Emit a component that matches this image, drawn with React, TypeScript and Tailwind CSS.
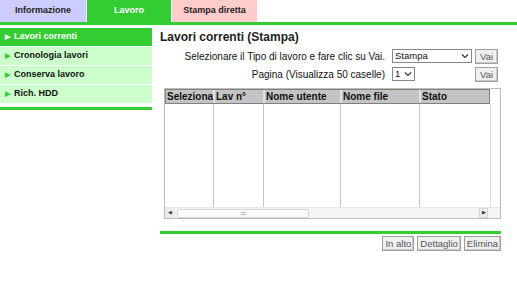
import React from 'react';

const tabs = [
  { label: 'Informazione', cls: 'w-[86px] bg-[#ccccff] text-[#222]' },
  { label: 'Lavoro', cls: 'w-[84px] bg-[#33cc33] text-white' },
  { label: 'Stampa diretta', cls: 'w-[85px] bg-[#ffcccc] text-[#222]' },
];

const menu = ['Lavori correnti', 'Cronologia lavori', 'Conserva lavoro', 'Rich. HDD'];

const cols = [
  { label: 'Seleziona', w: 'w-[49px]' },
  { label: 'Lav n°', w: 'w-[50px]' },
  { label: 'Nome utente', w: 'w-[77px]' },
  { label: 'Nome file', w: 'w-[79px]' },
  { label: 'Stato', w: 'flex-1' },
];

function Btn({ children, wide }: { children: React.ReactNode; wide?: boolean }) {
  return (
    <button
      className={`h-[15px] ${wide ? 'px-[4px]' : 'px-[2px]'} border border-[#a0a0a0] bg-[#f0f0f0] text-[9.5px] leading-[13px] text-[#555] shadow-[inset_-1px_-1px_0_#c8c8c8] whitespace-nowrap`}
    >
      {children}
    </button>
  );
}

function Arrow() {
  return (
    <svg width="8" height="6" viewBox="0 0 8 6">
      <path d="M1 1.5 L4 4.5 L7 1.5" stroke="#333" strokeWidth="1.2" fill="none" />
    </svg>
  );
}

export default function App() {
  return (
    <div className="w-[517px] h-[295px] bg-white font-['Liberation_Sans',Arial,sans-serif] text-[10px] text-[#111] overflow-hidden">
      {/* Tabs */}
      <div className="flex gap-[1px] h-[22px] border-b-[3px] border-[#33cc33] box-content">
        {tabs.map((t) => (
          <div key={t.label} className={`${t.cls} flex items-center justify-center font-bold text-[9px]`}>
            {t.label}
          </div>
        ))}
      </div>

      <div className="flex">
        {/* Sidebar */}
        <div className="w-[152px] pt-[3px]">
          <div className="flex flex-col gap-[1px]">
            {menu.map((m, i) => (
              <div
                key={m}
                className={`h-[18px] flex items-center pl-[5px] gap-[4px] font-bold text-[9px] ${
                  i === 0 ? 'bg-[#33cc33] text-white' : 'bg-[#ccffcc] text-[#111]'
                }`}
              >
                <span className={`text-[7px] ${i === 0 ? 'text-white' : 'text-[#33cc33]'}`}>▶</span>
                {m}
              </div>
            ))}
          </div>
          <div className="mt-[4px] h-[3px] bg-[#33cc33]" />
        </div>

        {/* Main */}
        <div className="ml-[8px] w-[341px]">
          <div className="mt-[5px] font-bold text-[12px] leading-[14px] text-[#222]">Lavori correnti (Stampa)</div>

          <div className="mt-[3px] flex items-center h-[18px]">
            <span className="w-[232px] shrink-0 text-right pr-[7px] whitespace-nowrap">
              Selezionare il Tipo di lavoro e fare clic su Vai.
            </span>
            <div className="w-[80px] h-[14px] border border-[#888] flex items-center justify-between px-[2px] text-[9.5px]">
              <span>Stampa</span>
              <Arrow />
            </div>
            <div className="ml-[3px]"><Btn wide>Vai</Btn></div>
          </div>

          <div className="flex items-center h-[18px]">
            <span className="w-[232px] shrink-0 text-right pr-[7px] whitespace-nowrap">Pagina (Visualizza 50 caselle)</span>
            <div className="w-[23px] h-[14px] border border-[#888] flex items-center justify-between px-[2px] text-[9.5px]">
              <span>1</span>
              <Arrow />
            </div>
            <div className="ml-[60px]"><Btn wide>Vai</Btn></div>
          </div>

          {/* Table box */}
          <div className="mt-[5px] ml-[4px] w-[337px] h-[131px] border border-[#bdbdbd] flex flex-col">
            <div className="flex flex-1">
              <div className="w-[325px] flex flex-col">
                <div className="flex h-[15px] bg-[#c4c4c4] border border-[#808080]">
                  {cols.map((c, i) => (
                    <div
                      key={c.label}
                      className={`${c.w} font-bold text-[10px] leading-[13px] pl-[1px] text-[#111] whitespace-nowrap ${i < cols.length - 1 ? 'border-r-2 border-[#e2e2e2]' : ''}`}
                    >
                      {c.label}
                    </div>
                  ))}
                </div>
                <div className="flex flex-1">
                  {cols.map((c, i) => (
                    <div key={c.label} className={`${c.w} ${i < cols.length - 1 ? 'border-r border-[#c4c4c4]' : ''}`} />
                  ))}
                </div>
              </div>
              <div className="flex-1 border-l border-[#dcdcdc] mt-[15px]" />
            </div>
            {/* horizontal scrollbar */}
            <div className="h-[11px] flex items-center bg-[#f4f4f4] border-t border-[#e6e6e6]">
              <div className="w-[10px] h-[10px] flex items-center justify-center bg-[#ececec]">
                <span className="text-[5px] text-[#333]">◀</span>
              </div>
              <div className="ml-[2px] w-[132px] h-[9px] bg-[#fafafa] border border-[#d6d6d6] rounded-[2px] flex items-center justify-center">
                <div className="w-[5px] h-[3px] border-y border-[#bbb]" />
              </div>
              <div className="flex-1" />
              <div className="w-[9px] h-[10px] flex items-center justify-center bg-[#ececec] border border-[#d6d6d6] mr-[12px]">
                <span className="text-[5px] text-[#333]">▶</span>
              </div>
            </div>
          </div>

          <div className="mt-[12px] h-[3px] w-[341px] bg-[#33cc33]" />

          <div className="mt-[2px] flex justify-end gap-[3px] w-[341px]">
            <Btn>In alto</Btn>
            <Btn>Dettaglio</Btn>
            <Btn>Elimina</Btn>
          </div>
        </div>
      </div>
    </div>
  );
}
